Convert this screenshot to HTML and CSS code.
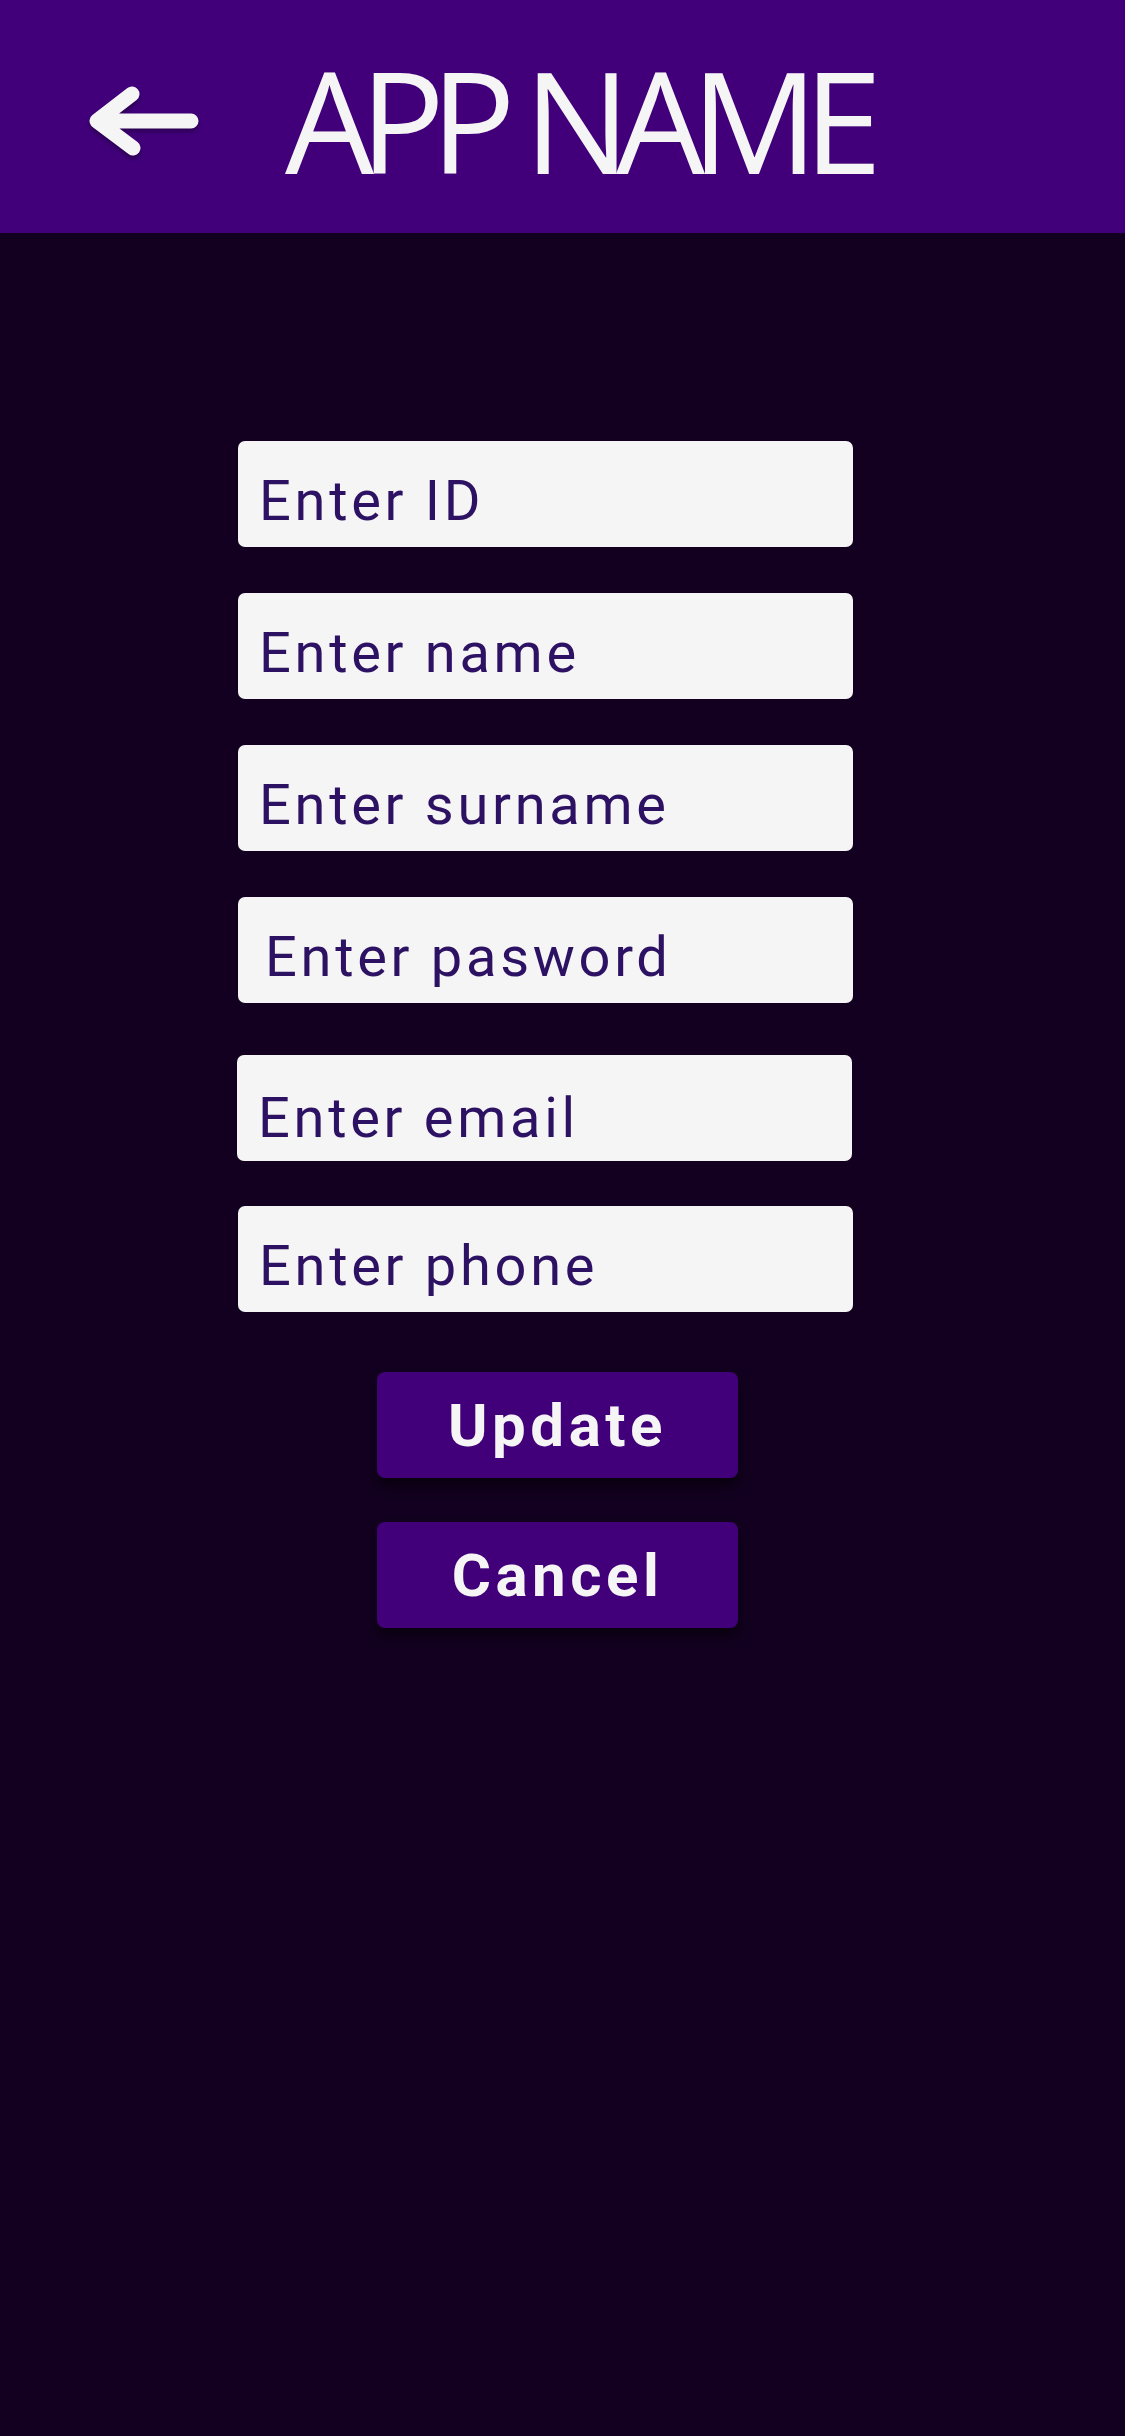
FILE: index.html
```html
<!DOCTYPE html>
<html lang="en">
<head>
<meta charset="utf-8">
<title>APP NAME</title>
<link rel="stylesheet" href="styles.css">
</head>
<body>
<header class="topbar">
  <svg class="back" width="124" height="84" viewBox="0 0 124 84" aria-hidden="true">
    <path d="M108 41 H15 M49 14 L14 41 L50 68" fill="none" stroke="#f5f5f5" stroke-width="15" stroke-linecap="round" stroke-linejoin="round"/>
  </svg>
  <h1 class="title">APP NAME</h1>
</header>
<main class="form">
  <input class="field" type="text" placeholder="Enter ID">
  <input class="field" type="text" placeholder="Enter name">
  <input class="field" type="text" placeholder="Enter surname">
  <input class="field field-pass" type="password" placeholder="Enter pasword">
  <input class="field field-email" type="email" placeholder="Enter email">
  <input class="field field-phone" type="tel" placeholder="Enter phone">
  <div class="actions">
    <button class="btn" type="button">Update</button>
    <button class="btn" type="button">Cancel</button>
  </div>
</main>
</body>
</html>
```
FILE: styles.css
```css
html, body {
  margin: 0;
  padding: 0;
}
body {
  background: #130020;
  min-height: 2436px;
  font-family: Roboto, "Noto Sans", sans-serif;
}
.topbar {
  height: 233px;
  background: #41007a;
  display: flex;
  align-items: flex-start;
}
.back {
  display: block;
  margin-top: 80px;
  margin-left: 83px;
  filter: drop-shadow(0 3px 2px rgba(20, 0, 40, 0.5));
}
.title {
  margin: 49px 0 0 78px;
  font-family: "Open Sans", sans-serif;
  font-weight: 400;
  font-size: 141px;
  line-height: 141px;
  letter-spacing: -0.1em;
  color: #f5f5f5;
}
.form {
  display: flex;
  flex-direction: column;
  align-items: flex-start;
  padding-top: 208px;
  padding-left: 238px;
}
.field {
  box-sizing: border-box;
  width: 615px;
  height: 106px;
  margin: 0 0 46px 0;
  padding: 14px 0 0 21px;
  border: none;
  border-radius: 7px;
  background: #f5f5f5;
  font-family: Roboto, "Noto Sans", sans-serif;
  font-size: 56px;
  letter-spacing: 3.7px;
  color: #2d1163;
  outline: none;
}
.field::placeholder {
  color: #2d1163;
  opacity: 1;
}
.field-pass {
  padding-left: 27px;
  margin-bottom: 52px;
}
.field-email {
  margin-left: -1px;
  margin-bottom: 45px;
  padding-top: 20px;
}
.field-phone {
  margin-bottom: 0;
}
.actions {
  display: flex;
  flex-direction: column;
  gap: 44px;
  margin-top: 60px;
  margin-left: 139px;
}
.btn {
  width: 361px;
  height: 106px;
  border: none;
  border-radius: 8px;
  background: #41007a;
  color: #f5f5f5;
  font-family: Roboto, "Noto Sans", sans-serif;
  font-weight: 700;
  font-size: 60px;
  letter-spacing: 4.5px;
  padding: 0;
  box-shadow: 0 8px 12px rgba(0, 0, 0, 0.55);
}
```
